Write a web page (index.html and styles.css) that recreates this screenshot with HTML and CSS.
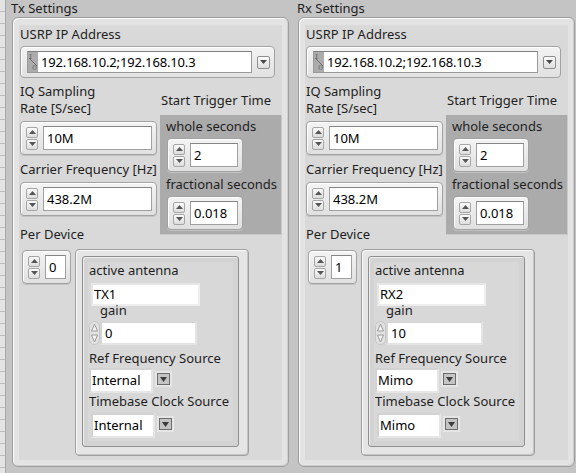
FILE: index.html
```html
<!DOCTYPE html>
<html>
<head>
<meta charset="utf-8">
<title>USRP Settings</title>
<link rel="stylesheet" href="styles.css">
</head>
<body>
<div class="screen">
  <div class="strip"></div>

  <section class="panel">
    <div class="panel-title">Tx Settings</div>
    <div class="cluster">
      <div class="cluster-in">
        <div class="lbl lbl-first">USRP IP Address</div>
        <div class="combo">
          <div class="combo-field">
            <span class="io"><span class="io-i">I</span><span class="io-o">0</span></span>
            <span class="combo-text">192.168.10.2;192.168.10.3</span>
          </div>
          <span class="dd-btn"><svg width="7" height="4" viewBox="0 0 7 4"><path d="M0 0H7L3.5 4Z" fill="#4a4a4a"/></svg></span>
        </div>
        <div class="row">
          <div class="col-left">
            <div class="lbl">IQ Sampling<br>Rate [S/sec]</div>
            <div class="num num-wide">
              <div class="spin"><span class="spin-b"><svg width="7" height="4" viewBox="0 0 7 4"><path d="M0 4H7L3.5 0Z" fill="#555"/></svg></span><span class="spin-b"><svg width="7" height="4" viewBox="0 0 7 4"><path d="M0 0H7L3.5 4Z" fill="#555"/></svg></span></div>
              <div class="field">10M</div>
            </div>
            <div class="lbl lbl-gap">Carrier Frequency [Hz]</div>
            <div class="num num-wide">
              <div class="spin"><span class="spin-b"><svg width="7" height="4" viewBox="0 0 7 4"><path d="M0 4H7L3.5 0Z" fill="#555"/></svg></span><span class="spin-b"><svg width="7" height="4" viewBox="0 0 7 4"><path d="M0 0H7L3.5 4Z" fill="#555"/></svg></span></div>
              <div class="field">438.2M</div>
            </div>
            <div class="lbl lbl-per">Per Device</div>
          </div>
          <div class="col-right">
            <div class="lbl lbl-stt">Start Trigger Time</div>
            <div class="trigger">
              <div class="lbl">whole seconds</div>
              <div class="num num-small">
                <div class="spin"><span class="spin-b"><svg width="7" height="4" viewBox="0 0 7 4"><path d="M0 4H7L3.5 0Z" fill="#555"/></svg></span><span class="spin-b"><svg width="7" height="4" viewBox="0 0 7 4"><path d="M0 0H7L3.5 4Z" fill="#555"/></svg></span></div>
                <div class="field">2</div>
              </div>
              <div class="lbl lbl-frac">fractional seconds</div>
              <div class="num num-small">
                <div class="spin"><span class="spin-b"><svg width="7" height="4" viewBox="0 0 7 4"><path d="M0 4H7L3.5 0Z" fill="#555"/></svg></span><span class="spin-b"><svg width="7" height="4" viewBox="0 0 7 4"><path d="M0 0H7L3.5 4Z" fill="#555"/></svg></span></div>
                <div class="field">0.018</div>
              </div>
            </div>
          </div>
        </div>
        <div class="array">
          <div class="num num-index">
            <div class="spin"><span class="spin-b"><svg width="7" height="4" viewBox="0 0 7 4"><path d="M0 4H7L3.5 0Z" fill="#555"/></svg></span><span class="spin-b"><svg width="7" height="4" viewBox="0 0 7 4"><path d="M0 0H7L3.5 4Z" fill="#555"/></svg></span></div>
            <div class="field">0</div>
          </div>
          <div class="elem">
            <div class="elem-cluster">
              <div class="elem-in">
                <div class="lbl">active antenna</div>
                <div class="str">TX1</div>
                <div class="lbl lbl-gain">gain</div>
                <div class="cnum">
                  <svg class="cspin" width="11" height="24" viewBox="0 0 11 24"><rect x="0.5" y="0.5" width="10" height="23" rx="5" fill="#e2e2e2" stroke="#c4c4c4"/><path d="M2.5 10L5.5 3L8.5 10Z" fill="#f4f4f4" stroke="#9a9a9a"/><path d="M2.5 14L5.5 21L8.5 14Z" fill="#f4f4f4" stroke="#9a9a9a"/></svg>
                  <div class="cfield">0</div>
                </div>
                <div class="lbl lbl-ref">Ref Frequency Source</div>
                <div class="ring">
                  <div class="ring-field">Internal</div>
                  <span class="ring-btn"><svg width="7" height="5" viewBox="0 0 7 5"><path d="M0 0H7L3.5 5Z" fill="#3c3c3c"/></svg></span>
                </div>
                <div class="lbl lbl-tb">Timebase Clock Source</div>
                <div class="ring ring-2">
                  <div class="ring-field">Internal</div>
                  <span class="ring-btn"><svg width="7" height="5" viewBox="0 0 7 5"><path d="M0 0H7L3.5 5Z" fill="#3c3c3c"/></svg></span>
                </div>
              </div>
            </div>
          </div>
        </div>
      </div>
    </div>
  </section>

  <section class="panel panel-rx">
    <div class="panel-title">Rx Settings</div>
    <div class="cluster">
      <div class="cluster-in">
        <div class="lbl lbl-first">USRP IP Address</div>
        <div class="combo">
          <div class="combo-field">
            <span class="io"><span class="io-i">I</span><span class="io-o">0</span></span>
            <span class="combo-text">192.168.10.2;192.168.10.3</span>
          </div>
          <span class="dd-btn"><svg width="7" height="4" viewBox="0 0 7 4"><path d="M0 0H7L3.5 4Z" fill="#4a4a4a"/></svg></span>
        </div>
        <div class="row">
          <div class="col-left">
            <div class="lbl">IQ Sampling<br>Rate [S/sec]</div>
            <div class="num num-wide">
              <div class="spin"><span class="spin-b"><svg width="7" height="4" viewBox="0 0 7 4"><path d="M0 4H7L3.5 0Z" fill="#555"/></svg></span><span class="spin-b"><svg width="7" height="4" viewBox="0 0 7 4"><path d="M0 0H7L3.5 4Z" fill="#555"/></svg></span></div>
              <div class="field">10M</div>
            </div>
            <div class="lbl lbl-gap">Carrier Frequency [Hz]</div>
            <div class="num num-wide">
              <div class="spin"><span class="spin-b"><svg width="7" height="4" viewBox="0 0 7 4"><path d="M0 4H7L3.5 0Z" fill="#555"/></svg></span><span class="spin-b"><svg width="7" height="4" viewBox="0 0 7 4"><path d="M0 0H7L3.5 4Z" fill="#555"/></svg></span></div>
              <div class="field">438.2M</div>
            </div>
            <div class="lbl lbl-per">Per Device</div>
          </div>
          <div class="col-right">
            <div class="lbl lbl-stt">Start Trigger Time</div>
            <div class="trigger">
              <div class="lbl">whole seconds</div>
              <div class="num num-small">
                <div class="spin"><span class="spin-b"><svg width="7" height="4" viewBox="0 0 7 4"><path d="M0 4H7L3.5 0Z" fill="#555"/></svg></span><span class="spin-b"><svg width="7" height="4" viewBox="0 0 7 4"><path d="M0 0H7L3.5 4Z" fill="#555"/></svg></span></div>
                <div class="field">2</div>
              </div>
              <div class="lbl lbl-frac">fractional seconds</div>
              <div class="num num-small">
                <div class="spin"><span class="spin-b"><svg width="7" height="4" viewBox="0 0 7 4"><path d="M0 4H7L3.5 0Z" fill="#555"/></svg></span><span class="spin-b"><svg width="7" height="4" viewBox="0 0 7 4"><path d="M0 0H7L3.5 4Z" fill="#555"/></svg></span></div>
                <div class="field">0.018</div>
              </div>
            </div>
          </div>
        </div>
        <div class="array">
          <div class="num num-index">
            <div class="spin"><span class="spin-b"><svg width="7" height="4" viewBox="0 0 7 4"><path d="M0 4H7L3.5 0Z" fill="#555"/></svg></span><span class="spin-b"><svg width="7" height="4" viewBox="0 0 7 4"><path d="M0 0H7L3.5 4Z" fill="#555"/></svg></span></div>
            <div class="field">1</div>
          </div>
          <div class="elem">
            <div class="elem-cluster">
              <div class="elem-in">
                <div class="lbl">active antenna</div>
                <div class="str">RX2</div>
                <div class="lbl lbl-gain">gain</div>
                <div class="cnum">
                  <svg class="cspin" width="11" height="24" viewBox="0 0 11 24"><rect x="0.5" y="0.5" width="10" height="23" rx="5" fill="#e2e2e2" stroke="#c4c4c4"/><path d="M2.5 10L5.5 3L8.5 10Z" fill="#f4f4f4" stroke="#9a9a9a"/><path d="M2.5 14L5.5 21L8.5 14Z" fill="#f4f4f4" stroke="#9a9a9a"/></svg>
                  <div class="cfield">10</div>
                </div>
                <div class="lbl lbl-ref">Ref Frequency Source</div>
                <div class="ring">
                  <div class="ring-field">Mimo</div>
                  <span class="ring-btn"><svg width="7" height="5" viewBox="0 0 7 5"><path d="M0 0H7L3.5 5Z" fill="#3c3c3c"/></svg></span>
                </div>
                <div class="lbl lbl-tb">Timebase Clock Source</div>
                <div class="ring ring-2">
                  <div class="ring-field">Mimo</div>
                  <span class="ring-btn"><svg width="7" height="5" viewBox="0 0 7 5"><path d="M0 0H7L3.5 5Z" fill="#3c3c3c"/></svg></span>
                </div>
              </div>
            </div>
          </div>
        </div>
      </div>
    </div>
  </section>
</div>
</body>
</html>
```

FILE: styles.css
```css
* { box-sizing: border-box; }

html, body {
  margin: 0;
  padding: 0;
}

body {
  width: 576px;
  height: 473px;
  overflow: hidden;
  background: #c4c4c4;
  font-family: "Noto Sans", "Open Sans", sans-serif;
  font-size: 13px;
  color: #1e1e1e;
}

.screen {
  display: flex;
  height: 473px;
}

.strip {
  width: 6px;
  flex: none;
  background: repeating-linear-gradient(to bottom, #e4e4e4 0, #e4e4e4 11px, #bcbcbc 11px, #bcbcbc 12px);
  border-right: 1px solid #a9a9a9;
}

.panel {
  width: 278px;
  flex: none;
  margin-left: 5px;
}

.panel-rx {
  margin-left: 8px;
}

.panel-title {
  height: 17px;
  line-height: 16px;
  white-space: nowrap;
}

.cluster {
  margin-left: 1px;
  width: 277px;
  height: 450px;
  border: 1px solid #9d9d9d;
  border-radius: 6px;
  background: #e3e3e3;
  box-shadow: inset 1px 1px 0 #fbfbfb, inset -1px -1px 0 #cfcfcf;
  padding: 7px 6px 6px 6px;
}

.cluster-in {
  height: 100%;
  background: #d9d9d9;
  padding-left: 1px;
}

.lbl {
  line-height: 17px;
  white-space: nowrap;
}

.lbl-first { padding-top: 1px; }

/* ---- combo box ---- */
.combo {
  margin-top: 3px;
  width: 255px;
  height: 32px;
  display: flex;
  align-items: center;
  gap: 5px;
  padding: 0 4px 0 6px;
  border: 1px solid #a2a2a2;
  border-radius: 4px;
  background: linear-gradient(#f3f3f3, #e1e1e1);
  box-shadow: inset 1px 1px 0 #fff;
}

.combo-field {
  width: 225px;
  height: 22px;
  display: flex;
  background: #fff;
  border: 1px solid #9a9a9a;
  border-top-color: #808080;
}

.io {
  width: 10px;
  flex: none;
  display: flex;
  flex-direction: column;
  justify-content: space-between;
  padding: 1px 0 1px 1px;
  background:
    linear-gradient(to top right, transparent calc(50% - 0.6px), #6e6e6e calc(50% - 0.6px), #6e6e6e calc(50% + 0.6px), transparent calc(50% + 0.6px)) 1px 6px / 8px 8px no-repeat,
    #acacac;
  font-family: "DejaVu Serif", serif;
  font-size: 8px;
  color: #6a6a6a;
  line-height: 7px;
}

.io-i { align-self: flex-start; }
.io-o { align-self: flex-end; padding-right: 1px; }

.combo-text {
  padding-left: 3px;
  line-height: 20px;
  color: #000;
  letter-spacing: -0.15px;
}

.dd-btn {
  width: 13px;
  height: 13px;
  flex: none;
  display: flex;
  align-items: center;
  justify-content: center;
  border: 1px solid #8e8e8e;
  border-radius: 2px;
  background: linear-gradient(#fcfcfc, #dedede);
}

/* ---- layout rows ---- */
.row {
  margin-top: 5px;
  display: flex;
  gap: 3px;
}

.col-left {
  width: 137px;
  flex: none;
}

.col-right {
  flex: 1;
}

.lbl-gap { margin-top: 6px; }
.lbl-per { margin-top: 10px; }
.lbl-stt { margin-top: 9px; padding-left: 1px; }

.col-left .num { margin-top: 4px; }

.trigger {
  margin-top: 6px;
  height: 120px;
  background: #ababab;
  border-right: 1px solid #c9c9c9;
  border-bottom: 1px solid #c9c9c9;
  padding: 3px 0 0 6px;
}

.trigger .num { margin-top: 3px; margin-left: 1px; }
.lbl-frac { margin-top: 4px; }

/* ---- system numeric ---- */
.num {
  display: flex;
  align-items: center;
  gap: 5px;
  height: 34px;
  padding: 0 4px 0 5px;
  border: 1px solid #a2a2a2;
  border-radius: 4px;
  background: linear-gradient(#f4f4f4, #e0e0e0);
  box-shadow: inset 1px 1px 0 #fff, 0 1px 0 #c2c2c2;
}

.num-wide { width: 137px; }
.num-small { width: 76px; }
.num-index { width: 49px; margin-top: 1px; margin-left: 2px; flex: none; }

.spin {
  width: 12px;
  flex: none;
  display: flex;
  flex-direction: column;
  gap: 1px;
}

.spin-b {
  height: 11px;
  display: flex;
  align-items: center;
  justify-content: center;
  border: 1px solid #a6a6a6;
  border-radius: 2px;
  background: linear-gradient(#fbfbfb, #dcdcdc);
}

.field {
  flex: 1;
  height: 24px;
  background: #fff;
  border: 1px solid #a0a0a0;
  border-top-color: #858585;
  padding: 0 3px;
  line-height: 22px;
  color: #000;
}

/* ---- array / per device ---- */
.array {
  margin-top: 6px;
  display: flex;
  align-items: flex-start;
  gap: 4px;
}

.elem {
  width: 174px;
  height: 207px;
  border: 1px solid #9f9f9f;
  border-radius: 4px;
  background: #e5e5e5;
  box-shadow: inset 1px 1px 0 #fafafa, inset -1px -1px 0 #c4c4c4;
  padding: 6px 9px 8px 6px;
}

.elem-cluster {
  height: 100%;
  border: 1px solid #8f8f8f;
  border-radius: 3px;
  background: #d3d3d3;
  box-shadow: inset 1px 1px 0 #eeeeee;
  padding: 5px;
}

.elem-in {
  height: 100%;
  background: #d8d8d8;
  padding-left: 1px;
}

.str {
  margin-top: 4px;
  margin-left: 2px;
  width: 109px;
  height: 23px;
  background: #fff;
  border: 2px solid #eeeeee;
  border-top-color: #e6e6e6;
  border-left-color: #e6e6e6;
  padding-left: 1px;
  line-height: 19px;
  color: #000;
}

.lbl-gain {
  margin-top: -4px;
  padding-left: 11px;
}

.cnum {
  margin-top: 2px;
  display: flex;
  align-items: flex-start;
}

.cspin { flex: none; }

.cfield {
  width: 97px;
  height: 24px;
  background: #fff;
  border: 2px solid #d6d6d6;
  border-right-color: #e4e4e4;
  border-bottom-color: #e4e4e4;
  padding-left: 3px;
  line-height: 20px;
  color: #000;
}

.lbl-ref { margin-top: 5px; }
.lbl-tb { margin-top: 0; }

.ring {
  display: flex;
  align-items: flex-start;
  gap: 4px;
  margin-top: 1px;
}

.ring-2 {
  margin-top: 3px;
  margin-left: 2px;
}

.ring-field {
  width: 64px;
  height: 25px;
  background: #fff;
  border: 2px solid #e6e6e6;
  border-top-color: #d2d2d2;
  border-left-color: #d2d2d2;
  padding-left: 1px;
  line-height: 21px;
  color: #000;
}

.ring-btn {
  margin-top: 5px;
  width: 13px;
  height: 12px;
  display: flex;
  align-items: center;
  justify-content: center;
  border: 1px solid #6c6c6c;
  background: #c4c4c4;
  box-shadow: 0 0 0 2px #e6e6e6;
}
```
